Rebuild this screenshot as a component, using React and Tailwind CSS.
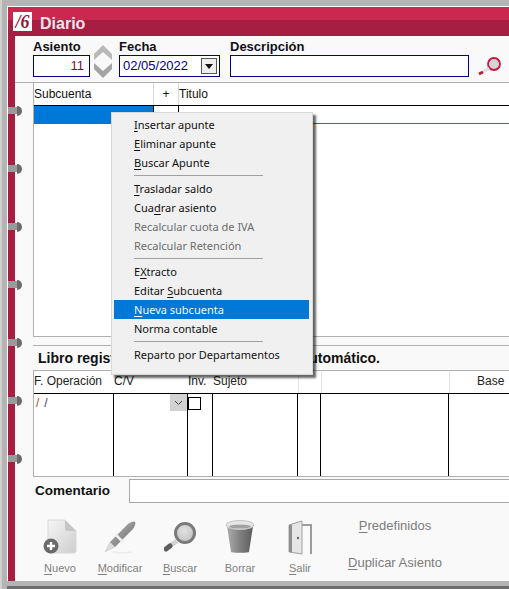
import React from 'react';

const sans = 'font-["Liberation_Sans",Arial,sans-serif]';

function U({ children }) {
  return <span className="underline underline-offset-2">{children}</span>;
}

function DocIcon() {
  return (
    <svg width="34" height="36" viewBox="0 0 34 36">
      <defs>
        <linearGradient id="docG" x1="0" y1="0" x2="1" y2="1">
          <stop offset="0" stopColor="#f6f6f6" />
          <stop offset="1" stopColor="#cdcdcd" />
        </linearGradient>
      </defs>
      <path d="M5 2a1 1 0 0 1 1-1h16l11 11v20a2 2 0 0 1-2 2H7a2 2 0 0 1-2-2z" fill="url(#docG)" stroke="#d8d8d8" />
      <path d="M22 1l11 11h-9a2 2 0 0 1-2-2z" fill="#c6c6c6" />
      <circle cx="8" cy="27" r="7.5" fill="#6a6a6a" />
      <path d="M8 23v8M4 27h8" stroke="#fff" strokeWidth="2.4" />
    </svg>
  );
}

function PenIcon() {
  return (
    <svg width="32" height="34" viewBox="0 0 32 34">
      <defs>
        <linearGradient id="penG" x1="0" y1="0" x2="1" y2="1">
          <stop offset="0" stopColor="#c0c0c0" />
          <stop offset="1" stopColor="#626262" />
        </linearGradient>
      </defs>
      <path d="M1 32l5-10L24 4c3-2 6-3 7-2s0 4-2 7L11 27z" fill="url(#penG)" />
      <path d="M1 32l5-10 5 5z" fill="#dcdcdc" />
      <path d="M11 14l8 8" stroke="#efefef" strokeWidth="2.5" />
      <path d="M8 32c6 1 14 1 20 0" stroke="#ececec" strokeWidth="1.5" fill="none" />
    </svg>
  );
}

function LensIcon() {
  return (
    <svg width="33" height="33" viewBox="0 0 33 33">
      <defs>
        <radialGradient id="lensG" cx="0.45" cy="0.4" r="0.7">
          <stop offset="0" stopColor="#e2e2e2" />
          <stop offset="1" stopColor="#bcbcbc" />
        </radialGradient>
      </defs>
      <circle cx="21" cy="12" r="9.5" fill="url(#lensG)" stroke="#7a7a7a" strokeWidth="3" />
      <path d="M13 20L4 26" stroke="#d4d4d4" strokeWidth="5" />
      <path d="M6 25L2 28" stroke="#5e5e5e" strokeWidth="5" strokeLinecap="round" />
    </svg>
  );
}

function TrashIcon() {
  return (
    <svg width="30" height="34" viewBox="0 0 30 34">
      <defs>
        <linearGradient id="binG" x1="0" y1="0" x2="1" y2="0">
          <stop offset="0" stopColor="#adadad" />
          <stop offset="0.5" stopColor="#808080" />
          <stop offset="1" stopColor="#5c5c5c" />
        </linearGradient>
      </defs>
      <path d="M2 6l4 26c1 1 17 1 18 0l4-26z" fill="url(#binG)" />
      <ellipse cx="15" cy="5" rx="14" ry="4.5" fill="#e6e6e6" stroke="#c4c4c4" />
      <ellipse cx="15" cy="6.5" rx="11" ry="2" fill="#a2a2a2" />
    </svg>
  );
}

function DoorIcon() {
  return (
    <svg width="25" height="35" viewBox="0 0 25 35">
      <path d="M9 4h15v30h-2V6H9z" fill="#9c9c9c" />
      <path d="M1 5l13-4v33l-13-2z" fill="#e6e6e6" stroke="#a0a0a0" />
      <path d="M1 5h3v27H1z" fill="#8e8e8e" />
      <circle cx="10" cy="18" r="1.2" fill="#666" />
    </svg>
  );
}

function Tool({ icon, label }) {
  return (
    <div className="mt-px flex w-[60px] flex-col items-center">
      <div className="flex h-[38px] items-center justify-center">{icon}</div>
      <div className="mt-[5px] text-[11px] leading-[14px] text-[#808080]">{label}</div>
    </div>
  );
}

function Menu() {
  const item = 'h-[19px] pl-[20px] leading-[19px]';
  const off = 'h-[19px] pl-[20px] leading-[19px] text-[#6d6d6d]';
  const sep = 'my-[3px] ml-[20px] mr-[46px] h-px bg-[#a0a0a0]';
  return (
    <div className='absolute left-[109px] top-[112px] z-20 w-[202px] border border-[#d8d8d8] bg-[#f0f0f0] pl-[2px] pr-[3px] pt-[2px] pb-[10px] font-["Noto_Sans",sans-serif] text-[11px] text-[#111] shadow-[3px_3px_2px_rgba(0,0,0,0.6)]'>
      <div className={item}><U>I</U>nsertar apunte</div>
      <div className={item}><U>E</U>liminar apunte</div>
      <div className={item}><U>B</U>uscar Apunte</div>
      <div className={sep} />
      <div className={item}><U>T</U>rasladar saldo</div>
      <div className={item}>Cua<U>d</U>rar asiento</div>
      <div className={off}>Recalcular cuota de IVA</div>
      <div className={off}>Recalcular Retención</div>
      <div className={sep} />
      <div className={item}>E<U>X</U>tracto</div>
      <div className={item}>Editar <U>S</U>ubcuenta</div>
      <div className={`${item} bg-[#0078d7] text-[#f4f8fc]`}><U>N</U>ueva subcuenta</div>
      <div className={item}>Norma contable</div>
      <div className={sep} />
      <div className={item}>Reparto por Departamentos</div>
    </div>
  );
}

function Rings() {
  return (
    <div className="absolute left-[6px] top-[104px] z-10 flex flex-col gap-[45px]">
      {[0, 1, 2, 3, 4, 5, 6].map((n) => (
        <div key={n} className="flex h-[13px] items-center">
          <div className="h-[7px] w-[9px] bg-[#9a9a9a]" />
          <div className="h-[10px] w-[5px] rounded-r-full bg-[#6a6a6a]" />
        </div>
      ))}
    </div>
  );
}

export default function App() {
  return (
    <div className={`relative flex h-[589px] w-[509px] flex-col overflow-hidden border-l-2 border-[#d0d0d0] bg-[#b4b4b4] pl-[5px] pt-[6px] ${sans}`}>
      <Rings />
      <Menu />
      <div className="flex h-[575px] flex-col border-l border-t border-white">
        <div className="flex h-[29px] items-start bg-[linear-gradient(#cb2850_0,#cb2850_13px,#a61f42_13px)] pl-[5px] pt-[5px]">
          <div className='flex h-[19px] w-[19px] items-center justify-center bg-white font-["Liberation_Serif",serif] text-[18px] font-bold italic leading-none text-[#8e1a38]'>/6</div>
          <div className="ml-[8px] mt-[2px] text-[16px] font-bold leading-[19px] text-[#f5e3e8]">Diario</div>
        </div>
        <div className="flex min-h-0 flex-1">
          <div className="w-[7px] bg-[#a61f42]" />
          <div className="flex min-w-0 flex-1 flex-col bg-[#f9f9f9]">
            <div className="flex h-[47px] items-start border-b border-[#b0b0b0] pl-[18px] pt-[3px] text-[#111]">
              <div className="w-[57px]">
                <div className="text-[13px] font-bold leading-[15px]">Asiento</div>
                <div className="mt-px h-[22px] border border-[#000080] bg-white pr-[5px] text-right text-[13px] leading-[20px] text-[#7a1030]">11</div>
              </div>
              <div className="ml-[3px] mt-[6px] flex w-[20px] flex-col items-center gap-[3px]">
                <svg width="20" height="15" viewBox="0 0 20 15"><path d="M10 0l9 9v6l-9-8-9 8V9z" fill="#b8b8b8" /></svg>
                <svg width="20" height="15" viewBox="0 0 20 15"><path d="M1 0l9 8 9-8v6l-9 9-9-9z" fill="#a4a4a4" /></svg>
              </div>
              <div className="ml-[6px] w-[101px]">
                <div className="text-[13px] font-bold leading-[15px]">Fecha</div>
                <div className="mt-px flex h-[22px] items-center justify-between border border-[#000080] bg-white pl-[3px] pr-[2px] text-[13px] text-[#000080]">
                  02/05/2022
                  <div className="flex h-[16px] w-[16px] items-center justify-center border border-[#555] bg-[#eee]">
                    <svg width="8" height="5" viewBox="0 0 8 5"><path d="M0 0h8L4 5z" fill="#111" /></svg>
                  </div>
                </div>
              </div>
              <div className="ml-[10px] w-[239px]">
                <div className="text-[13px] font-bold leading-[15px]">Descripción</div>
                <div className="mt-px h-[22px] border border-[#000080] bg-white" />
              </div>
              <div className="ml-[9px] mt-[17px]">
                <svg width="24" height="20" viewBox="0 0 24 20">
                  <circle cx="16" cy="8" r="6" fill="#d4d4d4" stroke="#c4173c" strokeWidth="1.8" />
                  <path d="M11 12l-6 4" stroke="#ddd" strokeWidth="3" />
                  <path d="M5 16l-4 2" stroke="#b81c40" strokeWidth="3" />
                </svg>
              </div>
            </div>
            <div className="ml-[18px] flex h-[254px] flex-col border-b border-l border-[#b0b0b0] bg-white">
              <div className="flex h-[23px] border-b border-black text-[12px] leading-[22px] text-[#111]">
                <div className="w-[120px] border-r border-[#d8d8d8]">Subcuenta</div>
                <div className="w-[25px] border-r border-[#d8d8d8] text-center">+</div>
                <div>Titulo</div>
              </div>
              <div className="flex h-[18px] border-b border-[#0078d7]">
                <div className="w-[120px] border-r border-black bg-[#0078d7]" />
                <div className="w-[25px] border-r border-black" />
              </div>
            </div>
            <div className="ml-[18px] mt-[8px] flex h-[26px] items-center border-y border-[#b0b0b0] pl-[5px] text-[14px] font-bold whitespace-nowrap text-[#111]">
              Libro registro de IVA. Registro apuntes automático.
            </div>
            <div className="ml-[18px] flex h-[106px] flex-col border-b border-l border-[#b0b0b0] bg-white">
              <div className="flex h-[23px] border-b border-black text-[12px] leading-[20px] text-[#222]">
                <div className="w-[80px]">F. Operación</div>
                <div className="w-[74px]">C/V</div>
                <div className="w-[25px]">Inv.</div>
                <div className="w-[85px]">Sujeto</div>
                <div className="w-[23px] border-l border-[#e4e4e4]" />
                <div className="w-[128px] border-l border-[#e4e4e4]" />
                <div className="flex-1 border-l border-[#e4e4e4] pl-[27px]">Base</div>
              </div>
              <div className="flex min-h-0 flex-1 text-[12px]">
                <div className="flex w-[80px] gap-[5px] border-r border-black pl-[2px] pt-[2px] leading-[14px]">
                  <span className="text-[#a0522d]">/</span>
                  <span className="text-[#3a3a80]">/</span>
                </div>
                <div className="flex w-[74px] items-start justify-end border-r border-black">
                  <div className="flex h-[17px] w-[17px] items-center justify-center bg-[#d2d2d2]">
                    <svg width="9" height="6" viewBox="0 0 9 6"><path d="M1 1l3.5 3.5L8 1" fill="none" stroke="#444" /></svg>
                  </div>
                </div>
                <div className="w-[25px] border-r border-black pt-[3px]">
                  <div className="h-[13px] w-[13px] border border-black bg-white" />
                </div>
                <div className="w-[85px] border-r border-black" />
                <div className="w-[23px] border-r border-black" />
                <div className="w-[128px] border-r border-black" />
              </div>
            </div>
            <div className="flex h-[27px] items-center pl-[20px]">
              <div className="w-[94px] pt-px text-[13.5px] font-bold text-[#111]">Comentario</div>
              <div className="h-[24px] flex-1 border-y border-l border-[#a8a8a8] bg-white" />
            </div>
            <div className="flex flex-1 items-start pl-[15px] pt-[13px]">
              <Tool icon={<DocIcon />} label={<><U>N</U>uevo</>} />
              <Tool icon={<PenIcon />} label={<><U>M</U>odificar</>} />
              <Tool icon={<LensIcon />} label={<><U>B</U>uscar</>} />
              <Tool icon={<TrashIcon />} label="Borrar" />
              <Tool icon={<DoorIcon />} label={<><U>S</U>alir</>} />
              <div className="ml-[10px] flex w-[110px] flex-col items-center gap-[20px] text-[13px] leading-[17px] text-[#7c7c7c]">
                <div><U>P</U>redefinidos</div>
                <div><U>D</U>uplicar Asiento</div>
              </div>
            </div>
          </div>
        </div>
      </div>
      <div className="mt-[5px] h-[3px] bg-[#6e6e6e]" />
    </div>
  );
}
